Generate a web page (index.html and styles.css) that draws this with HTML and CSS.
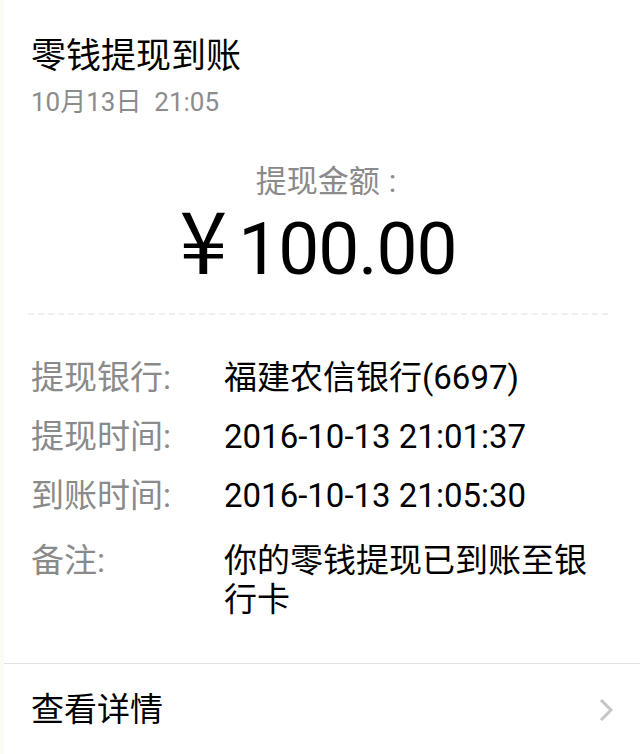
FILE: index.html
```html
<!DOCTYPE html>
<html lang="zh-CN">
<head>
    <meta charset="UTF-8">
    <meta name="viewport" content="width=device-width, initial-scale=1.0">
    <title>零钱提现到账</title>
    <link rel="stylesheet" href="styles.css">
</head>
<body>
    <div class="card">
        <div class="header">
            <h1 class="title">零钱提现到账</h1>
            <div class="date">10月13日&nbsp; 21:05</div>
        </div>

        <div class="amount-box">
            <div class="amount-label">提现金额<span class="colon">:</span></div>
            <div class="amount"><span class="yen">¥</span>100.00</div>
        </div>

        <div class="divider"></div>

        <div class="details">
            <div class="row">
                <div class="label">提现银行:</div>
                <div class="value">福建农信银行(6697)</div>
            </div>
            <div class="row">
                <div class="label">提现时间:</div>
                <div class="value">2016-10-13 21:01:37</div>
            </div>
            <div class="row">
                <div class="label">到账时间:</div>
                <div class="value">2016-10-13 21:05:30</div>
            </div>
            <div class="row note">
                <div class="label">备注:</div>
                <div class="value">你的零钱提现已到账至银行卡</div>
            </div>
        </div>

        <div class="footer">
            <span class="footer-text">查看详情</span>
            <svg class="chevron" width="16" height="24" viewBox="0 0 16 24">
                <polyline points="3,2 13,12 3,22" fill="none" stroke="#c6c6c6" stroke-width="3"/>
            </svg>
        </div>
    </div>
</body>
</html>
```

FILE: styles.css
```css
body {
    margin: 0;
    padding: 0;
    background-color: #fbfbf3;
    font-family: Roboto, "Noto Sans CJK SC", sans-serif;
}

.card {
    margin-left: 4px;
    height: 754px;
    background-color: #ffffff;
    overflow: hidden;
}

.header {
    padding: 35px 0 0 27px;
}

.title {
    margin: 0;
    font-size: 35px;
    font-weight: normal;
    line-height: 44px;
    color: #000;
}

.date {
    margin-top: 8px;
    font-size: 26px;
    line-height: 30px;
    color: #8c8c8c;
}

.amount-box {
    margin-top: 45px;
    text-align: center;
}

.amount-label {
    font-size: 31px;
    line-height: 40px;
    color: #8a8a8a;
}

.colon {
    margin-left: 9px;
    margin-right: -8px;
}

.amount {
    margin-top: 7px;
    height: 80px;
    font-size: 73px;
    line-height: 80px;
    letter-spacing: -1px;
    color: #000;
}

.yen {
    font-family: "Noto Sans CJK SC", sans-serif;
    font-size: 86px;
    line-height: 0;
    margin-right: 12px;
    margin-left: -8px;
}

.divider {
    margin: 24px 32px 0 24px;
    border-top: 2px dashed #f0f0f0;
}

.details {
    padding: 43px 28px 0 27px;
    display: flex;
    flex-direction: column;
    gap: 19px;
}

.row {
    display: flex;
    font-size: 33px;
    line-height: 40px;
}

.row.note {
    margin-top: 6px;
    line-height: 39px;
}

.label {
    width: 193px;
    flex-shrink: 0;
    color: #8a8a8a;
}

.value {
    color: #000;
}

.footer {
    margin-top: 44px;
    border-top: 1px solid #e2e2e2;
    padding: 26px 26px 0 27px;
    display: flex;
    justify-content: space-between;
    align-items: center;
}

.footer-text {
    font-size: 33px;
    line-height: 40px;
    color: #000;
}

.chevron {
    display: block;
}
```
